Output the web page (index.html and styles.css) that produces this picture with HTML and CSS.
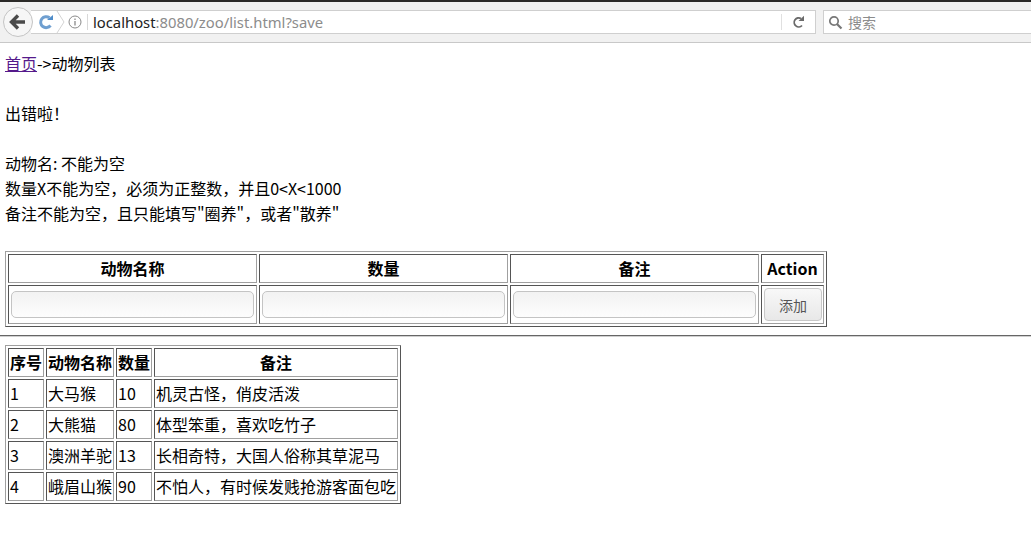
FILE: index.html
```html
<!DOCTYPE html>
<html lang="zh">
<head>
<meta charset="utf-8">
<title>动物列表</title>
<link rel="stylesheet" href="styles.css">
</head>
<body>
<header class="chrome">
  <div class="topline"></div>
  <div class="toolbar">
    <button class="back" aria-label="back">
      <svg width="18" height="16" viewBox="0 0 18 16"><path d="M9 1.500 2.500 8 9 14.500M3 8h13" fill="none" stroke="#4a4a4a" stroke-width="3.400"/></svg>
    </button>
    <div class="urlbar">
      <svg class="reload-blue" width="16" height="16" viewBox="0 0 16 16"><path d="M12.500 11.500A5.500 5.500 0 1 1 11.500 3.800" fill="none" stroke="#6f9fd0" stroke-width="3"/><path d="M9 6h6V1z" fill="#4f8cc9"/></svg>
      <svg class="chev" width="10" height="24" viewBox="0 0 10 24"><path d="M1 1l7 11-7 11" fill="none" stroke="#d4d4d4" stroke-width="1"/></svg>
      <svg class="info" width="14" height="14" viewBox="0 0 14 14"><circle cx="7" cy="7" r="6" fill="none" stroke="#8a8a8a"/><path d="M7 6v4.500M7 3.500v1.500" stroke="#8a8a8a" stroke-width="1.300"/></svg>
      <span class="sep"></span>
      <span class="url"><span class="host">localhost</span>:8080/zoo/list.html?save</span>
      <span class="spacer"></span>
      <span class="sep2"></span>
      <svg class="reload" width="14" height="14" viewBox="0 0 14 14"><path d="M11 10.500A4.500 4.500 0 1 1 10 3.500" fill="none" stroke="#6a6a6a" stroke-width="1.800"/><path d="M7.500 6H13V.8z" fill="#6a6a6a"/></svg>
    </div>
    <div class="search">
      <svg width="15" height="15" viewBox="0 0 15 15"><circle cx="6" cy="6" r="4.200" fill="none" stroke="#777" stroke-width="1.700"/><path d="M9 9l4.500 4.500" stroke="#777" stroke-width="2.200"/></svg>
      <span>搜索</span>
    </div>
  </div>
</header>
<main class="page">
  <a class="crumb" href="#">首页</a>-&gt;动物列表<br><br>
  出错啦！<br><br>
  动物名: 不能为空<br>
  数量X不能为空，必须为正整数，并且0&lt;X&lt;1000<br>
  备注不能为空，且只能填写"圈养"，或者"散养"<br><br>
  <table class="form-table">
    <tr><th class="wide">动物名称</th><th class="wide">数量</th><th class="wide">备注</th><th class="narrow">Action</th></tr>
    <tr>
      <td><input class="field" type="text"></td>
      <td><input class="field" type="text"></td>
      <td><input class="field" type="text"></td>
      <td class="action-cell"><button class="add">添加</button></td>
    </tr>
  </table>
  <hr class="rule">
  <table class="list-table">
    <tr><th>序号</th><th>动物名称</th><th>数量</th><th>备注</th></tr>
    <tr><td>1</td><td>大马猴</td><td>10</td><td>机灵古怪，俏皮活泼</td></tr>
    <tr><td>2</td><td>大熊猫</td><td>80</td><td>体型笨重，喜欢吃竹子</td></tr>
    <tr><td>3</td><td>澳洲羊驼</td><td>13</td><td>长相奇特，大国人俗称其草泥马</td></tr>
    <tr><td>4</td><td>峨眉山猴</td><td>90</td><td>不怕人，有时候发贱抢游客面包吃</td></tr>
  </table>
</main>
</body>
</html>
```
FILE: styles.css
```css
html, body { margin: 0; padding: 0; background: #fff; }
body { font: 16px/25px "Noto Sans CJK SC", "Noto Sans", sans-serif; color: #000; overflow: hidden; }

.chrome { height: 43px; box-sizing: border-box; background: #f1f1f1; border-bottom: 1px solid #c8c8c8; }
.topline { height: 2px; background: #2b2a28; }
.toolbar { display: flex; align-items: center; height: 40px; padding-left: 3px; padding-right: 0; }
.back { width: 30px; height: 30px; border-radius: 50%; border: 1px solid #c4c4c4; background: #f6f6f6; padding: 0; display: flex; align-items: center; justify-content: center; flex: none; z-index: 1; }
.urlbar { width: 785px; height: 24px; margin-left: -2px; box-sizing: border-box; background: #fff; border: 1px solid #cfcfcf; border-left: 0; display: flex; align-items: center; padding-left: 7px; flex: none; }
.chev { margin-left: 2px; flex: none; }
.info { margin-left: 2px; flex: none; }
.sep { width: 1px; height: 16px; background: #d8d8d8; margin-left: 5px; }
.url { margin-left: 5px; font: 14.800px "Noto Sans", sans-serif; color: #8c8c8c; white-space: nowrap; }
.host { color: #222; }
.spacer { flex: 1; }
.sep2 { width: 1px; height: 16px; background: #e0e0e0; margin-right: 9px; }
.reload { margin-right: 10px; flex: none; }
.search { margin-left: 7px; flex: 1; height: 24px; box-sizing: border-box; background: #fff; border: 1px solid #cfcfcf; border-right: 0; display: flex; align-items: center; gap: 5px; padding-left: 4px; color: #8c8c8c; font-size: 14px; }

.page { padding: 8px 5px 0; }
.crumb { color: #551a8b; }

table { border-collapse: separate; border-spacing: 2px; border: 1px solid; border-color: #a0a0a0 #555 #555 #a0a0a0; }
th, td { border: 1px solid; border-color: #555 #a0a0a0 #a0a0a0 #555; padding: 1px; line-height: 25px; }
th { font-weight: 700; text-align: center; }
td { text-align: left; }

.form-table th { height: 26px; padding: 0 0 1px; }
.form-table td { padding: 0 2px; height: 37px; }
.form-table th.wide { width: 247px; }
.form-table th.narrow { width: 61px; }
.form-table td.action-cell { padding: 0 1px; }
.field { display: block; width: 243px; height: 27px; box-sizing: border-box; border: 1px solid #c4c4c4; border-radius: 5px; background: linear-gradient(#f2f2f2, #fdfdfd); padding: 0; margin: 0; }
.add { display: block; width: 58px; height: 33px; margin: 0 0 0 auto; border: 1px solid #c8c8c8; border-radius: 4px; background: linear-gradient(#f8f8f8, #e8e8e8); color: #555; font: 14px "Noto Sans CJK SC", sans-serif; padding: 0; }

.rule { margin: 8px -5px; border: 0; border-top: 1px solid #666; border-bottom: 1px solid #d0d0d0; height: 0; }

.list-table td, .list-table th { height: 27px; padding: 0 1px; white-space: nowrap; }
```
